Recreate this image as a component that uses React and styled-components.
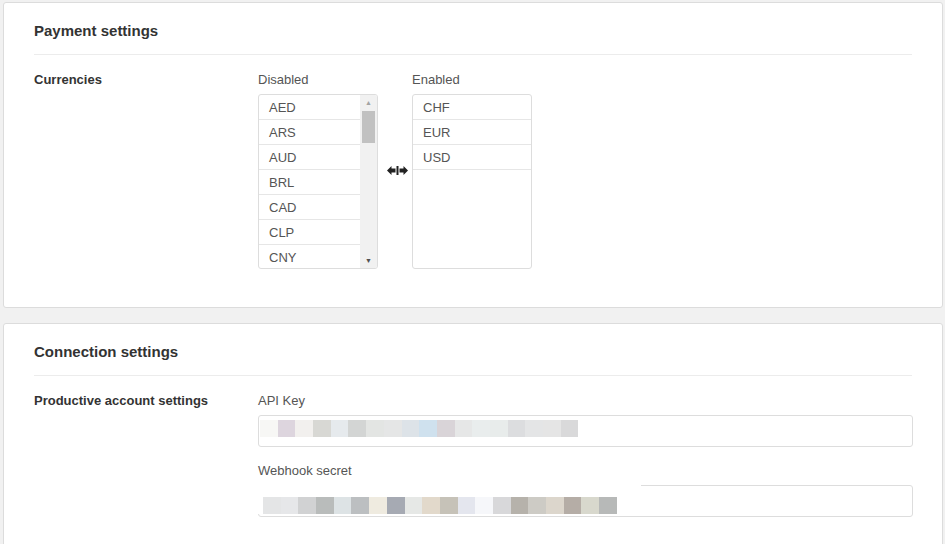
import React from "react";
import styled, { createGlobalStyle } from "styled-components";

const GlobalStyle = createGlobalStyle`
  body {
    margin: 0;
    background: #f1f1f1;
    font-family: "Liberation Sans", Arial, sans-serif;
    color: #333;
  }
`;

const Page = styled.div`
  padding: 2px 2px 0 3px;
  display: flex;
  flex-direction: column;
  gap: 15px;
`;

const Card = styled.section`
  background: #fff;
  border: 1px solid #dcdcdc;
  border-radius: 3px;
  padding: 18px 30px ${(p) => p.$bottom || 38}px;
`;

const Title = styled.h2`
  margin: 0;
  font-size: 15px;
  line-height: 20px;
  font-weight: bold;
  color: #333;
`;

const Divider = styled.hr`
  margin: 13px 0 16px;
  border: 0;
  border-top: 1px solid #ececec;
  height: 0;
`;

const Row = styled.div`
  display: grid;
  grid-template-columns: 224px 1fr;
`;

const RowLabel = styled.div`
  font-size: 13px;
  line-height: 18px;
  font-weight: bold;
  color: #333;
`;

const FieldLabel = styled.div`
  font-size: 13px;
  line-height: 18px;
  color: #555;
  margin-bottom: 5px;
`;

const Picker = styled.div`
  display: flex;
  align-items: flex-start;
`;

const Column = styled.div`
  display: flex;
  flex-direction: column;
`;

const ListBox = styled.div`
  width: 120px;
  height: 175px;
  box-sizing: border-box;
  border: 1px solid #ddd;
  border-radius: 3px;
  overflow: hidden;
  display: flex;
`;

const Items = styled.ul`
  list-style: none;
  margin: 0;
  padding: 0;
  flex: 1;
`;

const Item = styled.li`
  height: 24px;
  line-height: 26px;
  padding-left: 10px;
  border-bottom: 1px solid #e6e6e6;
  font-size: 13px;
  color: #555;
`;

const Scrollbar = styled.div`
  width: 17px;
  background: #f1f1f1;
  display: flex;
  flex-direction: column;
  align-items: center;
`;

const ScrollArrow = styled.div`
  height: 15px;
  width: 100%;
  display: flex;
  align-items: center;
  justify-content: center;
  font-size: 7px;
  color: ${(p) => p.$color};
`;

const Thumb = styled.div`
  width: 13px;
  height: 32px;
  background: #c1c1c1;
  margin-top: 1px;
`;

const ScrollSpacer = styled.div`
  flex: 1;
`;

const Switch = styled.div`
  width: 34px;
  box-sizing: border-box;
  display: flex;
  padding: 95px 0 0 9px;
`;

const Fields = styled.div`
  display: flex;
  flex-direction: column;
`;

const Field = styled.div`
  & + & {
    margin-top: 15px;
  }
`;

const Input = styled.div`
  position: relative;
  height: 32px;
  box-sizing: border-box;
  border: 1px solid #ddd;
  border-radius: 3px;
  background: #fff;
  margin-right: -1px;
`;

const Redacted = styled.div`
  position: absolute;
  left: ${(p) => p.$left}px;
  top: ${(p) => p.$top}px;
  display: flex;
  padding: ${(p) => p.$pad};
  background: #fff;
`;

const Pixel = styled.span`
  width: 17.7px;
  height: 17px;
  background: ${(p) => p.$c};
`;

const disabled = ["AED", "ARS", "AUD", "BRL", "CAD", "CLP", "CNY"];
const enabled = ["CHF", "EUR", "USD"];

const apiKeyColors = [
  "#f7f7f5", "#ddd5de", "#f2f0ee", "#d8d8d4", "#e6eaed", "#d3d5d4",
  "#e3e5e3", "#e5e6e6", "#dde3e8", "#cfe1ee", "#d9d4d8", "#e6e7e7",
  "#e9eded", "#e8eceb", "#dcdddf", "#e4e5e6", "#e5e5e5", "#d9d9da",
];

const secretColors = [
  "#e4e5e6", "#e6e7e9", "#d1d2d3", "#b9bcbb", "#dde3e5", "#bcbfc1",
  "#efebe0", "#a6aab3", "#e6e8e6", "#e2d9cb", "#c6c2b8", "#e4e6ee",
  "#f6f7fa", "#d8d8da", "#b6b2ab", "#cdcbc5", "#dcd6cc", "#b5ada6",
  "#d8d8cd", "#b7b9b8",
];

const SwapIcon = () => (
  <svg width="21" height="9" viewBox="0 0 21 9">
    <path d="M0 4.5 L4.5 0 V2.5 H8.5 V6.5 H4.5 V9 Z" fill="#222" />
    <rect x="9.5" y="0" width="2" height="9" fill="#222" />
    <path d="M21 4.5 L16.5 0 V2.5 H12.5 V6.5 H16.5 V9 Z" fill="#222" />
  </svg>
);

const App = () => {
  return (
    <>
      <GlobalStyle />
      <Page>
        <Card>
          <Title>Payment settings</Title>
          <Divider />
          <Row>
            <RowLabel>Currencies</RowLabel>
            <Picker>
              <Column>
                <FieldLabel>Disabled</FieldLabel>
                <ListBox>
                  <Items>
                    {disabled.map((c) => (
                      <Item key={c}>{c}</Item>
                    ))}
                  </Items>
                  <Scrollbar>
                    <ScrollArrow $color="#a3a3a3">▲</ScrollArrow>
                    <Thumb />
                    <ScrollSpacer />
                    <ScrollArrow $color="#505050">▼</ScrollArrow>
                  </Scrollbar>
                </ListBox>
              </Column>
              <Switch>
                <SwapIcon />
              </Switch>
              <Column>
                <FieldLabel>Enabled</FieldLabel>
                <ListBox>
                  <Items>
                    {enabled.map((c) => (
                      <Item key={c}>{c}</Item>
                    ))}
                  </Items>
                </ListBox>
              </Column>
            </Picker>
          </Row>
        </Card>

        <Card $bottom={40}>
          <Title>Connection settings</Title>
          <Divider />
          <Row>
            <RowLabel>Productive account settings</RowLabel>
            <Fields>
              <Field>
                <FieldLabel>API Key</FieldLabel>
                <Input>
                  <Redacted $left={1} $top={4} $pad="0">
                    {apiKeyColors.map((c, i) => (
                      <Pixel key={i} $c={c} />
                    ))}
                  </Redacted>
                </Input>
              </Field>
              <Field>
                <FieldLabel>Webhook secret</FieldLabel>
                <Input>
                  <Redacted $left={-1} $top={-1} $pad="12px 24px 0 5px">
                    {secretColors.map((c, i) => (
                      <Pixel key={i} $c={c} />
                    ))}
                  </Redacted>
                </Input>
              </Field>
            </Fields>
          </Row>
        </Card>
      </Page>
    </>
  );
};

export default App;
